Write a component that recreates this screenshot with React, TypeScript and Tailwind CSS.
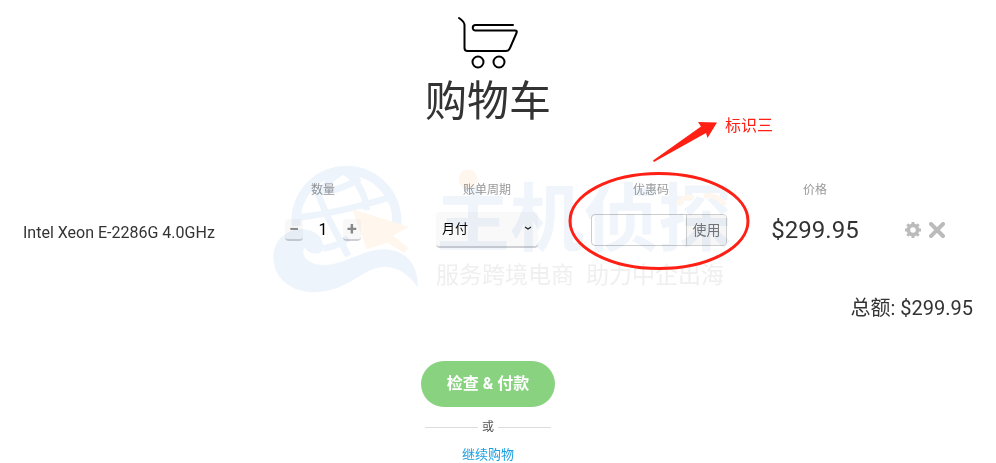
import { useState } from 'react';

const UNIT_PRICE = 299.95;

function CartIcon() {
  return (
    <svg
      viewBox="0 0 60 54"
      className="h-[54px] w-[60px]"
      fill="none"
      stroke="#000"
      strokeWidth="2"
      strokeLinecap="round"
      strokeLinejoin="round"
      aria-hidden="true"
    >
      <path d="M1 2 C4 4 6.500 6 6.500 9 V32 Q6.500 35 9.500 35 H48 Q51 35 52 32 L58.500 17 Q59.500 14.500 57 14.500 H17.500 A2.750 2.750 0 0 1 17.500 9 H55" />
      <circle cx="20" cy="46" r="5.500" />
      <circle cx="41" cy="46" r="5.500" />
    </svg>
  );
}

function GearIcon() {
  return (
    <svg viewBox="0 0 16 16" className="h-4 w-4" fill="none" stroke="currentColor" aria-hidden="true">
      <circle cx="8" cy="8" r="4.600" strokeWidth="3.600" />
      <path
        d="M8 0v3M8 13v3M0 8h3M13 8h3M2.300 2.300l2 2M11.700 11.700l2 2M2.300 13.700l2-2M11.700 4.300l2-2"
        strokeWidth="3"
      />
    </svg>
  );
}

function CloseIcon() {
  return (
    <svg viewBox="0 0 16 16" className="h-4 w-4" fill="none" stroke="currentColor" strokeWidth="4" aria-hidden="true">
      <path d="M2 2l12 12M14 2l-12 12" strokeLinecap="square" />
    </svg>
  );
}

function Watermark() {
  return (
    <div
      aria-hidden="true"
      className="pointer-events-none absolute -top-px left-1/2 z-10 ml-1 flex -translate-x-1/2 gap-4 whitespace-nowrap mix-blend-multiply"
    >
      <svg viewBox="6 12 444 390" className="h-[130px] w-[148px]" fill="none">
        <path d="M79 198 A151 151 0 1 1 378 208" stroke="#eef4fc" strokeWidth="28" />
        <path
          d="M140 85 Q150 120 175 175 L235 288 M215 35 Q160 70 145 110 M225 35 Q285 80 290 150 M85 172 Q200 160 360 112 M125 85 Q180 110 270 55 M160 265 Q200 260 235 235"
          stroke="#eef4fc"
          strokeWidth="20"
        />
        <path
          d="M10 290 C12 235 55 207 95 207 C145 210 165 240 158 272 C140 288 112 280 103 262 C92 290 115 315 165 315 C235 310 275 268 345 268 C415 272 445 320 443 382 C420 345 385 322 345 320 C275 322 240 392 135 397 C55 395 10 350 10 290 Z"
          fill="#eef4fc"
        />
        <path d="M247 148 L417 200 L370 227 L416 265 L402 278 L352 248 L290 268 Z" fill="#fff6ee" />
      </svg>
      <div className="relative pt-4">
        <p className="text-[74px] leading-[80px] font-bold text-[#f0f5fc]">主机侦探</p>
        <p className="flex gap-3 text-[23px] leading-8 text-[#efefef]">
          <span>服务跨境电商</span>
          <span>助力中企出海</span>
        </p>
        <svg viewBox="0 0 296 40" className="absolute top-1 left-0 h-10 w-[296px]" fill="none">
          <circle cx="32" cy="11" r="9.500" fill="#fff6ee" />
          <path d="M242 37 Q246 27 258 30 M268 28 Q280 25 289 37" stroke="#fff6ee" strokeWidth="5" />
        </svg>
      </div>
    </div>
  );
}

function CouponNote() {
  return (
    <div className="pointer-events-none absolute -top-[58px] -left-2 z-20 flex w-[212px] items-start text-[#ff2015]">
      <svg viewBox="0 0 184 156" className="h-[156px] w-[184px] shrink-0" fill="none" aria-hidden="true">
        <ellipse cx="92" cy="105" rx="89" ry="47.500" stroke="currentColor" strokeWidth="3" />
        <path d="M86 44.500 L134 10.500 L131 6 L150 6.500 L140.500 22 L139 17 L87 46 Z" fill="currentColor" />
      </svg>
      <span className="-ml-[26px] text-base leading-5 whitespace-nowrap">标识三</span>
    </div>
  );
}

function CartTable() {
  const [quantity, setQuantity] = useState(1);
  const stepButton =
    'flex h-[22px] w-[18px] items-center justify-center rounded border-b-2 border-[#d0d0d4] bg-[#f8f8f8] text-lg leading-none font-bold text-[#888]';

  return (
    <table className="w-full table-fixed">
      <thead>
        <tr className="h-8 align-middle text-xs text-[#999]">
          <th aria-label="Product" />
          <th className="w-38 font-normal">数量</th>
          <th className="w-44 font-normal">账单周期</th>
          <th className="relative w-38 font-normal">
            <label htmlFor="coupon">优惠码</label>
            <CouponNote />
          </th>
          <th className="w-44 font-normal">价格</th>
          <th className="w-[70px]" aria-label="Actions" />
        </tr>
      </thead>
      <tbody>
        <tr className="h-12">
          <td className="pt-1.5 text-base whitespace-nowrap text-[#333]">Intel Xeon E-2286G 4.0GHz</td>
          <td>
            <div className="flex items-center justify-center gap-3">
              <button className={stepButton} aria-label="Decrease" onClick={() => setQuantity(Math.max(1, quantity - 1))}>
                −
              </button>
              <input
                className="w-4 text-center text-base text-black"
                aria-label="数量"
                value={quantity}
                onChange={(e) => setQuantity(Number(e.target.value) || 1)}
              />
              <button className={stepButton} aria-label="Increase" onClick={() => setQuantity(quantity + 1)}>
                +
              </button>
            </div>
          </td>
          <td>
            <div className="relative mx-auto w-[102px]">
              <select
                aria-label="账单周期"
                className="h-9 w-full appearance-none rounded border-b-2 border-[#cfcfd3] bg-[#f9f9f9] pl-1.5 text-[13px] text-black"
              >
                <option>月付</option>
              </select>
              <svg viewBox="0 0 8 4" className="absolute top-3.5 right-1.5 h-1 w-2" fill="none" stroke="#222" aria-hidden="true">
                <path d="M1 1 L4 3 L7 1" strokeWidth="1.200" />
              </svg>
            </div>
          </td>
          <td className="pl-4">
            <div className="flex h-8 overflow-hidden rounded border border-[#ccc]">
              <input id="coupon" className="w-0 flex-1 px-2 text-sm" />
              <button className="w-10 border-l border-[#ccc] bg-[#f6f6f6] text-sm text-[#777]">使用</button>
            </div>
          </td>
          <td className="text-center text-2xl text-[#333]">${(UNIT_PRICE * quantity).toFixed(2)}</td>
          <td>
            <div className="flex justify-start gap-2 pl-0.5 text-[#bbb]">
              <button aria-label="Settings">
                <GearIcon />
              </button>
              <button aria-label="Remove">
                <CloseIcon />
              </button>
            </div>
          </td>
        </tr>
      </tbody>
      <tfoot>
        <tr>
          <td colSpan={6} className="pt-10 text-right text-xl text-[#333]">
            总额: ${(UNIT_PRICE * quantity).toFixed(2)}
          </td>
        </tr>
      </tfoot>
    </table>
  );
}

export default function App() {
  return (
    <main className="bg-white pt-4 font-[Roboto,'Noto_Sans_CJK_SC',sans-serif]">
      <header className="flex flex-col items-center pr-5">
        <CartIcon />
        <h1 className="text-[42px] leading-[64px] text-[#333]">购物车</h1>
      </header>
      <section className="relative mt-[31px] px-[23px] pt-[9px]">
        <Watermark />
        <CartTable />
      </section>
      <div className="mt-[39px] flex flex-col items-center pr-5">
        <button className="h-[46px] rounded-full bg-[#88d280] px-[26px] text-base font-bold text-white">
          检查 &amp; 付款
        </button>
        <div className="mt-3 flex w-[126px] items-center gap-1 text-xs leading-4 text-[#555]">
          <span className="h-px flex-1 bg-[#ddd]" />
          <span>或</span>
          <span className="h-px flex-1 bg-[#ddd]" />
        </div>
        <a href="#" className="mt-2.5 text-[13px] leading-5 text-[#1a9fe0]">
          继续购物
        </a>
      </div>
    </main>
  );
}
